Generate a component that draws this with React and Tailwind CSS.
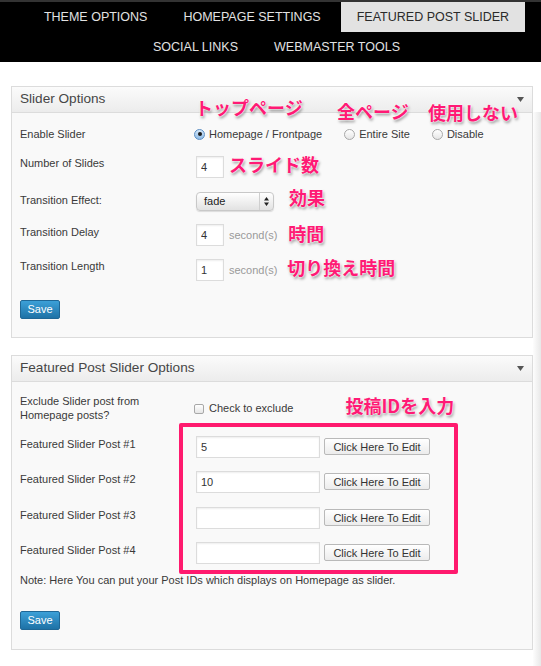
import React from "react";

const note =
  "absolute whitespace-nowrap font-['Noto_Sans_CJK_JP',sans-serif] text-[18px] font-bold leading-[18px] text-[#ff1a75] [text-shadow:0_0_2px_#fff,0_0_2px_#fff,1px_2px_3px_rgba(0,0,0,0.45)]";
const noteInline =
  "whitespace-nowrap font-['Noto_Sans_CJK_JP',sans-serif] text-[18px] font-bold leading-[18px] text-[#ff1a75] [text-shadow:0_0_2px_#fff,0_0_2px_#fff,1px_2px_3px_rgba(0,0,0,0.45)]";

const tabs = ["THEME OPTIONS", "HOMEPAGE SETTINGS", "FEATURED POST SLIDER", "SOCIAL LINKS", "WEBMASTER TOOLS"];

const Arrow = () => (
  <svg width="7" height="5" viewBox="0 0 7 5">
    <path d="M0 0H7L3.5 5z" fill="#555" />
  </svg>
);

const Panel = ({ title, className, children }) => (
  <div className={`relative ml-[11px] mr-[8px] border border-[#dcdcdc] bg-[#f9f9f9] ${className}`}>
    <div className="flex h-[26px] items-center justify-between border-b border-[#dcdcdc] bg-linear-to-b from-[#fbfbfb] to-[#ececec] pl-[8px] pr-[8px]">
      <span className="text-[13.6px] text-[#464646]">{title}</span>
      <Arrow />
    </div>
    {children}
  </div>
);

const Radio = ({ checked, label }) => (
  <span className="mr-[22px] flex items-center">
    <span
      className={`flex h-[11px] w-[11px] items-center justify-center rounded-full border ${
        checked ? "border-[#5b8ec4] bg-linear-to-b from-[#d6e8f9] to-[#8ebbe6]" : "border-[#a8a8a8] bg-linear-to-b from-white to-[#e6e6e6]"
      }`}
    >
      {checked && <span className="h-[4px] w-[4px] rounded-full bg-[#1b1b1b]" />}
    </span>
    <span className="ml-[4px]">{label}</span>
  </span>
);

const Field = ({ value, w }) => (
  <input
    readOnly
    defaultValue={value}
    className={`ml-[2px] h-[22px] ${w} border border-[#dcdcdc] bg-white pl-[4px] text-[11px] text-[#333] shadow-[inset_0_1px_2px_rgba(0,0,0,0.07)] outline-none`}
  />
);

const SaveBtn = () => (
  <button className="h-[19px] w-[40px] rounded-[2px] border border-[#1f6796] bg-linear-to-b from-[#3ca0d8] to-[#1e72a6] text-[11px] text-white">
    Save
  </button>
);

const Label = ({ children, pt = "" }) => <div className={`w-[174px] shrink-0 leading-[14px] ${pt}`}>{children}</div>;

export default function App() {
  return (
    <div className="relative h-[666px] w-full overflow-hidden bg-white font-['Liberation_Sans',Arial,sans-serif] text-[11px] text-[#3a3a3a]">
      {/* tabs */}
      <div className="border-t-2 border-[#333] bg-black">
        <div className="flex flex-wrap justify-center gap-x-1 pl-3">
          {tabs.map((t) => (
            <div
              key={t}
              className={`flex h-[30px] items-center px-4 text-[12.5px] ${
                t === "FEATURED POST SLIDER" ? "bg-[#e2e2e2] text-[#2a2a2a]" : "text-[#e2e2e2]"
              }`}
            >
              {t}
            </div>
          ))}
        </div>
      </div>

      {/* right shadow */}
      <div className="absolute bottom-0 right-0 top-[112px] w-[8px] bg-linear-to-r from-[#fdfdfd] to-[#e8e8e8]" />

      <Panel title="Slider Options" className="mt-[24px]">
        <span className={`${note} left-[183px] top-[11px]`}>トップページ</span>
        <span className={`${note} left-[325px] top-[15px]`}>全ページ</span>
        <span className={`${note} left-[416px] top-[16px]`}>使用しない</span>

        <div className="pb-[18px] pl-[8px] pt-[11px]">
          <div className="flex h-[20px] items-center">
            <Label>Enable Slider</Label>
            <Radio checked label="Homepage / Frontpage" />
            <Radio label="Entire Site" />
            <Radio label="Disable" />
          </div>

          <div className="mt-[12px] flex items-start">
            <Label>Number of Slides</Label>
            <Field value="4" w="w-[28px]" />
            <span className={`${noteInline} ml-[5px] -mt-[1px]`}>スライド数</span>
          </div>

          <div className="mt-[14px] flex items-start">
            <Label pt="pt-[1px]">Transition Effect:</Label>
            <div className="ml-[2px] flex h-[19px] w-[78px] items-center rounded-[4px] border border-[#c8c8c8] bg-linear-to-b from-white to-[#e2e2e2] shadow-[0_1px_1px_rgba(0,0,0,0.12)]">
              <span className="flex-1 pl-[7px] text-[11px] text-[#222]">fade</span>
              <span className="flex h-full w-[14px] items-center justify-center border-l border-[#cfcfcf]">
                <svg width="5" height="9" viewBox="0 0 5 9">
                  <path d="M2.5 0L5 3.5H0z M2.5 9L0 5.5H5z" fill="#222" />
                </svg>
              </span>
            </div>
            <span className={`${noteInline} ml-[15px] -mt-[4px]`}>効果</span>
          </div>

          <div className="mt-[13px] flex items-start">
            <Label pt="pt-[1px]">Transition Delay</Label>
            <Field value="4" w="w-[28px]" />
            <span className="ml-[5px] self-center text-[#9a9a9a]">second(s)</span>
            <span className={`${noteInline} ml-[11px]`}>時間</span>
          </div>

          <div className="mt-[13px] flex items-start">
            <Label>Transition Length</Label>
            <Field value="1" w="w-[28px]" />
            <span className="ml-[5px] self-center text-[#9a9a9a]">second(s)</span>
            <span className={`${noteInline} ml-[10px] -mt-[1px]`}>切り換え時間</span>
          </div>

          <div className="mt-[19px]">
            <SaveBtn />
          </div>
        </div>
      </Panel>

      <Panel title="Featured Post Slider Options" className="mt-[17px]">
        <div className="absolute left-[167px] top-[67px] h-[151px] w-[279px] rounded-[2px] border-4 border-[#ff1a6e]" />

        <div className="pb-[19px] pl-[8px] pt-[12px]">
          <div className="flex h-[28px] items-center">
            <Label>
              Exclude Slider post from
              <br />
              Homepage posts?
            </Label>
            <span className="flex items-center pt-[1px]">
              <span className="h-[10px] w-[10px] rounded-[2px] border border-[#a8a8a8] bg-linear-to-b from-white to-[#e6e6e6]" />
              <span className="ml-[5px]">Check to exclude</span>
            </span>
            <span className={`${noteInline} ml-[52px] -mt-[6px]`}>投稿IDを入力</span>
          </div>

          {[
            ["Featured Slider Post #1", "5", "mt-[14px]"],
            ["Featured Slider Post #2", "10", "mt-[13px]"],
            ["Featured Slider Post #3", "", "mt-[14px]"],
            ["Featured Slider Post #4", "", "mt-[13px]"],
          ].map(([l, v, mt]) => (
            <div key={l} className={`${mt} flex items-start`}>
              <Label pt="pt-[1px]">{l}</Label>
              <Field value={v} w="w-[124px]" />
              <button className="ml-[4px] mt-[2px] h-[17px] w-[106px] rounded-[2px] border border-[#b9b9b9] bg-linear-to-b from-white to-[#ececec] text-[11px] text-[#333]">
                Click Here To Edit
              </button>
            </div>
          ))}

          <div className="mt-[9px] leading-[14px]">Note: Here You can put your Post IDs which displays on Homepage as slider.</div>

          <div className="mt-[24px]">
            <SaveBtn />
          </div>
        </div>
      </Panel>
    </div>
  );
}
